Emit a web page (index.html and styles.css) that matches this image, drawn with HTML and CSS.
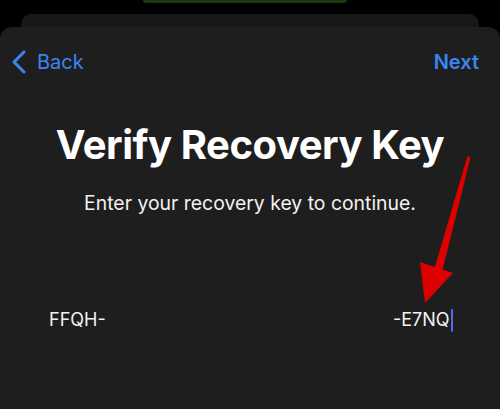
FILE: index.html
```html
<!DOCTYPE html>
<html>
<head>
<meta charset="utf-8">
<link rel="stylesheet" href="styles.css">
</head>
<body>
<div class="screen">
  <div class="pill"></div>
  <div class="back-sheet"></div>
  <div class="sheet">
    <div class="nav">
      <div class="nav-back">
        <svg class="chev" width="16" height="24" viewBox="0 0 16 24"><path d="M13 2 L3 12 L13 22" fill="none" stroke="#3a86f0" stroke-width="3" stroke-linecap="round" stroke-linejoin="round"/></svg>
        <span>Back</span>
      </div>
      <div class="nav-next">Next</div>
    </div>
    <h1 class="title">Verify Recovery Key</h1>
    <p class="subtitle">Enter your recovery key to continue.</p>
    <div class="key-row">
      <span class="key-part">FFQH-</span>
      <span class="key-part">-E7NQ<span class="cursor"></span></span>
    </div>
  </div>
  <svg class="arrow" width="500" height="409" viewBox="0 0 500 409">
    <polygon points="467.5,156 470.5,157.5 442,272 434,270" fill="#dc0000"/>
    <polygon points="420,262 453,273 425,303" fill="#dc0000"/>
  </svg>
</div>
</body>
</html>
```
FILE: styles.css
```css
html, body {
  margin: 0;
  padding: 0;
  background: #000;
}
.screen {
  position: relative;
  width: 500px;
  height: 409px;
  overflow: hidden;
  background: #000;
  font-family: Inter, "Liberation Sans", sans-serif;
  display: flex;
  flex-direction: column;
}
.pill {
  align-self: center;
  width: 204px;
  height: 3px;
  margin-left: -10px;
  background: #1b3a10;
  border-radius: 0 0 12px 12px;
}
.back-sheet {
  margin: 11px 21px 0;
  height: 13px;
  background: #181818;
  border-radius: 10px 10px 0 0;
}
.sheet {
  flex: 1;
  background: #1e1e1e;
  border-radius: 12px 12px 0 0;
  display: flex;
  flex-direction: column;
  align-items: center;
}
.nav {
  align-self: stretch;
  display: flex;
  justify-content: space-between;
  align-items: center;
  padding: 23px 21px 0 11px;
  color: #3a86f0;
  font-size: 20px;
  line-height: 24px;
}
.nav-back {
  display: flex;
  align-items: center;
  gap: 10px;
}
.nav-next {
  font-weight: 600;
}
.title {
  margin: 47px 0 0;
  color: #fff;
  font-size: 40px;
  line-height: 48px;
  font-weight: 700;
  letter-spacing: -0.45px;
}
.subtitle {
  margin: 23px 0 0;
  color: #f2f2f2;
  font-size: 19.4px;
  line-height: 22px;
}
.key-row {
  align-self: stretch;
  display: flex;
  justify-content: space-between;
  align-items: center;
  margin-top: 94px;
  padding: 0 47px 0 49px;
  color: #f2f2f2;
  font-size: 18px;
  line-height: 24px;
}
.key-part {
  display: flex;
  align-items: center;
}
.cursor {
  display: inline-block;
  width: 2.5px;
  height: 23px;
  margin-left: 1px;
  background: #4a6ef0;
  border-radius: 1px;
}
.arrow {
  position: absolute;
  left: 0;
  top: 0;
  pointer-events: none;
}
```
